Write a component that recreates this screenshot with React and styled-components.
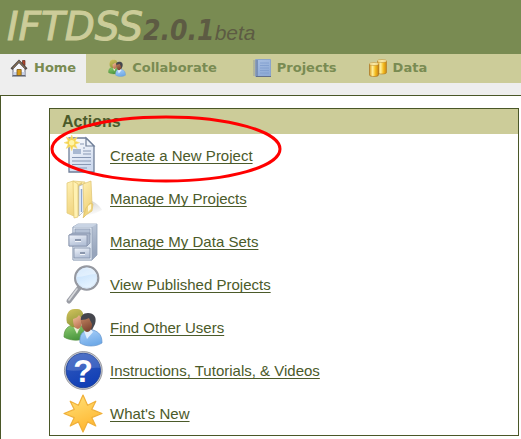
import React from "react";
import styled, { createGlobalStyle } from "styled-components";

const colors = {
  olive: "#798b52",
  khaki: "#cccc99",
  dark: "#4b5a2a",
  border: "#4a5728",
  page: "#eeeeee",
};

const GlobalStyle = createGlobalStyle`
  *, *::before, *::after { box-sizing: border-box; }
  body {
    margin: 0;
    background: ${colors.page};
    font-family: "Liberation Sans", Arial, sans-serif;
  }
`;

const Page = styled.div`
  display: flex;
  flex-direction: column;
  min-height: 100vh;
`;

const Header = styled.header`
  background: ${colors.olive};
  height: 54px;
  padding-left: 7px;
`;

const Brand = styled.h1`
  margin: 0;
  font: italic 400 39px/54px "DejaVu Sans", Verdana, sans-serif;
  color: ${colors.khaki};
  -webkit-text-stroke: 1px ${colors.khaki};
  white-space: nowrap;
`;

const Version = styled.span`
  font: italic 700 28px "DejaVu Sans Condensed", "DejaVu Sans", sans-serif;
  color: #5d5b43;
  -webkit-text-stroke: 0;
`;

const Stage = styled.span`
  font: italic 400 21px "Liberation Sans", Arial, sans-serif;
  color: #5d5b43;
  -webkit-text-stroke: 0;
`;

const Nav = styled.nav`
  display: flex;
  height: 29px;
  background: ${colors.khaki};
`;

const Tab = styled.a`
  display: flex;
  align-items: center;
  gap: 6px;
  padding: 0 10px 2px;
  margin-right: 12px;
  font: bold 13px "DejaVu Sans", Verdana, sans-serif;
  color: ${colors.olive};
  background: ${(p) => (p.$active ? colors.page : "transparent")};
  text-decoration: none;
  white-space: nowrap;

  & + & + & {
    margin-left: 4px;
  }
  & + & + & + & {
    margin-left: 0;
  }
`;

const TabIcon = styled.svg`
  width: 18px;
  height: 18px;
  flex: none;
`;

const Main = styled.main`
  flex: 1;
  margin-top: 12px;
  padding: 12px 2px 3px 48px;
  background: #fff;
  border-top: 1px solid ${colors.border};
  border-left: 1px solid ${colors.border};
`;

const Panel = styled.section`
  border: 1px solid ${colors.border};
`;

const PanelTitle = styled.h2`
  margin: 0;
  padding-left: 12px;
  background: ${colors.khaki};
  color: ${colors.dark};
  font-size: 16px;
  line-height: 25px;
`;

const ActionList = styled.ul`
  margin: 0;
  padding: 0;
  list-style: none;
`;

const ActionRow = styled.li`
  position: relative;
  display: flex;
  align-items: center;
  gap: 7px;
  height: 43px;
  padding-left: 13px;
`;

const ActionIcon = styled.svg`
  width: 40px;
  height: 43px;
  flex: none;
`;

const ActionLink = styled.a`
  color: ${colors.dark};
  font-size: 15px;
  line-height: 18px;
  text-decoration: underline;
  text-decoration-thickness: 1px;
  text-decoration-skip-ink: none;
  text-underline-offset: 2px;
`;

const Highlight = styled.svg`
  position: absolute;
  left: 0;
  top: -19px;
  width: 232px;
  height: 69px;
  pointer-events: none;
`;

const HomeIcon = () => (
  <TabIcon viewBox="0 0 18 18" aria-hidden="true">
    <path d="M12.5 1.5h2.5v5h-2.5z" fill="#b3452b" stroke="#5c2a20" strokeWidth=".7" />
    <path d="M3 9.5 9 3.5l6 6V16.5H3z" fill="#f7f8fc" stroke="#6d7080" strokeWidth="1" />
    <path d="M3.5 13h11v3h-11z" fill="#c9d3ea" />
    <path d="M7 10.5h4.2v6H7z" fill="#d79b18" stroke="#7b5a20" strokeWidth=".8" />
    <path d="M1.4 10.2 9 2.2l7.6 8" fill="none" stroke="#4c4545" strokeWidth="2.4" />
    <path d="M2.6 9.2 9 2.4l6.4 6.8" fill="none" stroke="#c9a266" strokeWidth=".7" />
    <path d="M2 17h14" stroke="#555b69" strokeWidth="1" />
  </TabIcon>
);

const PeopleArt = () => (
  <>
    <path d="M1 31c0-8 4-11 9-12h6c5 1 8 5 8 13-7 3-17 3-23-1z" fill="url(#greenShirt)" stroke="#54903c" strokeWidth=".7" />
    <path d="m10 20 4 8 4-9z" fill="#e7f0d4" />
    <path d="M4 17C2 8 6 2 13 3c7-1 9 6 6 13l-3 6-7-1z" fill="url(#hair)" />
    <path d="M10 13c3-1 5-2 6-4l3 4c0 6-1 9-4 10-4-1-5-5-5-10z" fill="url(#skin)" />
    <path d="M17 37c-1-9 3-12 8-13h5c6 2 9 5 9 13-6 4-16 4-22 0z" fill="url(#blueShirt)" stroke="#6394cc" strokeWidth=".7" />
    <path d="m21 25 3 8 6-7-2-3h-5z" fill="#e2effd" />
    <path d="M18 15c-1-5 2-8 7-8 6 0 9 4 7 11l-3 6-9-5z" fill="#45464d" />
    <path d="M18 14c3 0 6-1 8-2l3 6c0 5-2 8-5 8-4-1-6-6-6-12z" fill="url(#tan)" />
  </>
);

const CollaborateIcon = () => (
  <TabIcon viewBox="0 2 40 38" aria-hidden="true"><PeopleArt /></TabIcon>
);

const NotebookIcon = () => (
  <TabIcon viewBox="0 0 18 18" aria-hidden="true">
    <path d="M2.5.5h15v17h-15z" fill="url(#book)" stroke="#8ca4cb" />
    <path d="M3 1h2v16H3z" fill="#7790bb" />
    <path d="M7 4h9M7 6.5h9M7 9h9M7 11.5h9M7 14h9" stroke="#7e9ccd" strokeWidth=".8" />
    <path d="M0 2h4M0 4h4M0 6h4M0 8h4M0 10h4M0 12h4M0 14h4M0 16h4" stroke="#8c94a0" strokeWidth=".8" />
    <path d="M3 17.5h15" stroke="#626f8a" />
  </TabIcon>
);

const DataIcon = () => (
  <TabIcon viewBox="0 0 18 18" aria-hidden="true">
    <path d="M8.5 2v11.5c0 2 9 2 9 0V2z" fill="url(#gold)" stroke="#ae791f" strokeWidth=".6" />
    <ellipse cx="13" cy="2" rx="4.5" ry="1.4" fill="#fff0ad" stroke="#b98930" strokeWidth=".6" />
    <path d="M.5 5v11c0 2 9 2 9 0V5z" fill="url(#gold)" stroke="#a26b1b" strokeWidth=".6" />
    <ellipse cx="5" cy="5" rx="4.5" ry="1.4" fill="#fff0ad" stroke="#b98930" strokeWidth=".6" />
  </TabIcon>
);

const NewProjectIcon = () => (
  <ActionIcon viewBox="0 0 40 43" aria-hidden="true">
    <path d="M6 4h17l8 8v26H6z" fill="url(#paper)" stroke="#6f7e98" strokeWidth="1.3" />
    <path d="M23 4v8h8z" fill="#eef3fa" stroke="#6f7e98" strokeWidth="1.2" />
    <path d="M10 15h8v5h-8z" fill="#a9b9d2" />
    <path d="M17 10h4M20 14h2M20 17h8M20 20h8M9 23.5h19M9 27h19M9 30.5h19M9 34h15" stroke="#8797b3" strokeWidth="1.2" />
    <path d="m8.7 1 1.5 4.2 4-2.2-2 4.2 4.5 1.5-4.5 1.5 2 4.2-4-2-1.5 4.3-1.5-4.3-4 2 2-4.2L1 8.7l4.2-1.5-2-4.2 4 2.2z" fill="#f6d44e" stroke="#f5df83" strokeWidth=".6" />
    <circle cx="8.7" cy="8.7" r="2.7" fill="#fff5a6" />
  </ActionIcon>
);

const FolderIcon = () => (
  <ActionIcon viewBox="0 0 40 43" aria-hidden="true">
    <path d="m20 38 9-14c5 2 9 7 10 9-5 3-11 5-19 5z" fill="url(#shade)" />
    <path d="m4 6 6-2 12 1 1 27-10 8-9-4z" fill="url(#folder)" stroke="#e3cb7b" strokeWidth=".8" />
    <path d="m10 4 5 3v33l-4 1z" fill="#fff1b2" stroke="#dfc46e" strokeWidth=".7" />
    <path d="m15 8 4-3v30l-4 4z" fill="#e4c978" />
    <path d="m16 9 5-2v27l-5 5z" fill="#f7faff" stroke="#a9b4bd" strokeWidth=".7" />
    <path d="M18.5 12v23" stroke="#8ea8cf" strokeWidth="1.5" />
    <path d="m20 7 8-3 1 23-8 13z" fill="url(#folder)" stroke="#dec370" strokeWidth=".7" />
    <path d="m23 31 4-5 3 1-1 7-6 4-3 3z" fill="#f1d680" stroke="#dcbd62" strokeWidth=".6" />
    <path d="m25 29 3-2v5l-3 3z" fill="#fff7d2" />
  </ActionIcon>
);

const CabinetIcon = () => (
  <ActionIcon viewBox="0 0 40 43" aria-hidden="true">
    <path d="m10 7 5-3h19v31l-5 5H10z" fill="url(#steelSide)" stroke="#93a2b9" strokeWidth=".8" />
    <path d="M10 7h19v33H10z" fill="#dbe3ef" stroke="#8f9db4" strokeWidth=".7" />
    <path d="m10 7 5-3h19l-5 3z" fill="#c9d4e4" />
    <path d="M12 9h15v6H12z" fill="#b4c1d5" stroke="#8795ad" strokeWidth=".6" />
    <path d="m6 15 4-2h17v10l-3 3H6z" fill="#a8b4c9" stroke="#7e8da6" strokeWidth=".7" />
    <path d="M6 15h18v11H6z" fill="url(#steel)" stroke="#8391aa" strokeWidth=".8" />
    <path d="M11 28h16v10H11z" fill="url(#steel)" stroke="#8190a8" strokeWidth=".8" />
    <path d="M12 20h6M17 33h5" stroke="#75839b" strokeWidth="1.6" />
    <path d="M12 21.5h6M17 34.5h5" stroke="#fff" strokeWidth=".8" />
  </ActionIcon>
);

const SearchIcon = () => (
  <ActionIcon viewBox="0 0 40 43" aria-hidden="true">
    <path d="m16 25-10 13" stroke="#9a9da5" strokeWidth="5" strokeLinecap="round" />
    <path d="m14 26-8 11" stroke="#d8dadd" strokeWidth="1.6" strokeLinecap="round" />
    <circle cx="23.7" cy="15" r="11.6" fill="url(#lens)" stroke="#9699a1" strokeWidth="2.2" />
    <circle cx="23.7" cy="15" r="10" fill="none" stroke="#d8e7f7" strokeWidth="1" />
    <path d="M14 14c1-10 16-13 19-3-8 0-11 3-19 3z" fill="#fff" opacity=".4" />
  </ActionIcon>
);

const UsersIcon = () => (
  <ActionIcon viewBox="0 0 40 43" aria-hidden="true"><PeopleArt /></ActionIcon>
);

const QuestionMark = styled.text`
  font: bold 32px "Liberation Sans", Arial, sans-serif;
  fill: #fff;
  text-anchor: middle;
`;

const HelpIcon = () => (
  <ActionIcon viewBox="0 0 40 43" aria-hidden="true">
    <circle cx="20.3" cy="21.5" r="18.9" fill="#c9cbd1" stroke="#85878e" strokeWidth=".8" />
    <circle cx="20.3" cy="21.5" r="17.2" fill="url(#help)" stroke="#173b94" strokeWidth=".8" />
    <path d="M4 21C4-1 36-1 37 19c-10-2-21 5-33 2z" fill="#fff" opacity=".15" />
    <QuestionMark x="20" y="33">?</QuestionMark>
  </ActionIcon>
);

const StarIcon = () => (
  <ActionIcon viewBox="0 0 40 43" aria-hidden="true">
    <path d="m20 3 4.6 10.3 8.2-4.1-4.1 8.2L39 21.5l-10.3 4.1 4.1 8.4-8.2-4.1L20 40l-4.6-10.1L7.2 34l4.1-8.4L1 21.5l10.3-4.1-4.1-8.2 8.2 4.1z" fill="url(#sun)" stroke="#f0b03a" strokeLinejoin="round" strokeWidth="1.2" />
  </ActionIcon>
);

const HiddenDefs = styled.svg`
  position: absolute;
  width: 0;
  height: 0;
`;

const gradients = [
  ["greenShirt", "#91cf73", "#4b973f"],
  ["blueShirt", "#add2fa", "#6faae8"],
  ["hair", "#d3c45e", "#8f963a"],
  ["skin", "#f4c5a0", "#bd7555"],
  ["tan", "#c0815e", "#7d4632"],
  ["paper", "#ffffff", "#cfdbef"],
  ["folder", "#fff0b3", "#efd27a"],
  ["shade", "#cfcfcc", "#fafafa"],
  ["steelSide", "#c9d3e2", "#97a5bc"],
  ["steel", "#f0f4fb", "#b4c1d7"],
  ["lens", "#b9dafb", "#e7f4ff"],
  ["help", "#345cbd", "#1240b6"],
  ["sun", "#ffe37b", "#ffb833"],
  ["book", "#a8bfe3", "#8fabd6"],
];

const Gradients = () => (
  <HiddenDefs aria-hidden="true">
    <defs>
      {gradients.map(([id, from, to]) => (
        <linearGradient key={id} id={id} x1="0" y1="0" x2=".4" y2="1">
          <stop stopColor={from} />
          <stop offset="1" stopColor={to} />
        </linearGradient>
      ))}
      <linearGradient id="gold">
        <stop stopColor="#d99a1f" />
        <stop offset=".35" stopColor="#fff09a" />
        <stop offset=".65" stopColor="#f5bd20" />
        <stop offset="1" stopColor="#c98610" />
      </linearGradient>
    </defs>
  </HiddenDefs>
);

const tabs = [
  { label: "Home", Icon: HomeIcon, active: true },
  { label: "Collaborate", Icon: CollaborateIcon },
  { label: "Projects", Icon: NotebookIcon },
  { label: "Data", Icon: DataIcon },
];

const actions = [
  { label: "Create a New Project", Icon: NewProjectIcon, highlighted: true },
  { label: "Manage My Projects", Icon: FolderIcon },
  { label: "Manage My Data Sets", Icon: CabinetIcon },
  { label: "View Published Projects", Icon: SearchIcon },
  { label: "Find Other Users", Icon: UsersIcon },
  { label: "Instructions, Tutorials, & Videos", Icon: HelpIcon },
  { label: "What's New", Icon: StarIcon },
];

export default function App() {
  return (
    <Page>
      <GlobalStyle />
      <Gradients />
      <Header>
        <Brand>IFTDSS<Version>2.0.1</Version><Stage>beta</Stage></Brand>
      </Header>
      <Nav aria-label="Main">
        {tabs.map(({ label, Icon, active }) => (
          <Tab key={label} href="#" $active={active} aria-current={active ? "page" : undefined}>
            <Icon />{label}
          </Tab>
        ))}
      </Nav>
      <Main>
        <Panel aria-labelledby="actions-title">
          <PanelTitle id="actions-title">Actions</PanelTitle>
          <ActionList>
            {actions.map(({ label, Icon, highlighted }) => (
              <ActionRow key={label}>
                <Icon />
                <ActionLink href="#">{label}</ActionLink>
                {highlighted && (
                  <Highlight viewBox="0 0 232 69" aria-hidden="true">
                    <ellipse cx="116" cy="34" rx="114" ry="32" fill="none" stroke="#f00" strokeWidth="3" />
                  </Highlight>
                )}
              </ActionRow>
            ))}
          </ActionList>
        </Panel>
      </Main>
    </Page>
  );
}
